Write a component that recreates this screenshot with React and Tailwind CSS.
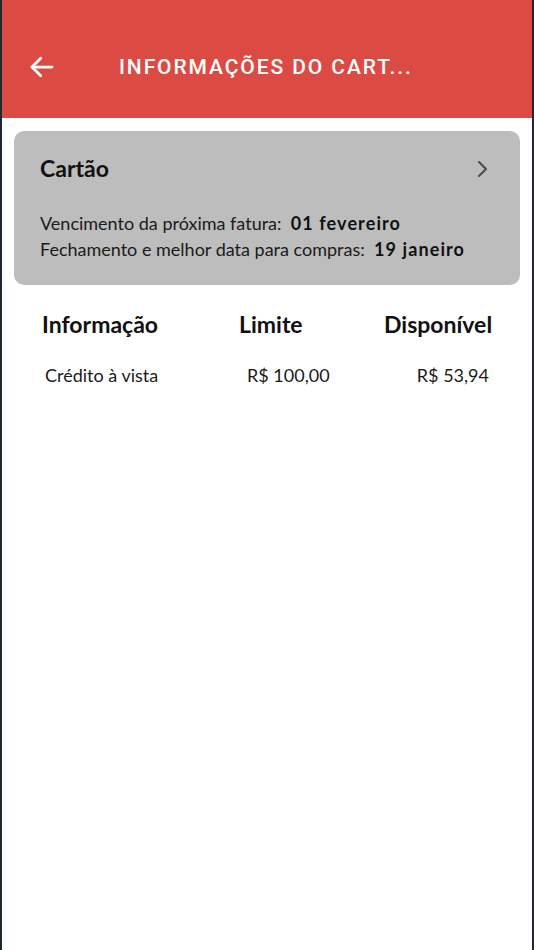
import React from "react";

const ArrowLeft = () => (
  <svg width="30" height="30" viewBox="0 0 24 24" fill="none" stroke="white" strokeWidth="2.2" strokeLinecap="round" strokeLinejoin="round">
    <path d="M20 12H4" />
    <path d="M11 5l-7 7 7 7" />
  </svg>
);

const ChevronRight = () => (
  <svg width="12" height="18" viewBox="0 0 12 18" fill="none" stroke="#4a4a4a" strokeWidth="2" strokeLinecap="round" strokeLinejoin="round">
    <path d="M3 2l7 7-7 7" />
  </svg>
);

const App = () => {
  const rows = [
    { info: "Crédito à vista", limite: "R$ 100,00", disponivel: "R$ 53,94" },
  ];

  return (
    <div className="w-[534px] h-[950px] bg-white border-l-2 border-r-2 border-[#1e2832] font-['Lato','Noto_Sans',sans-serif] text-[#111]">
      {/* header */}
      <div className="h-[118px] bg-[#dc4b43] flex items-center pl-[25px] pt-[16px]">
        <ArrowLeft />
        <h1 className="ml-[62px] text-white text-[21px] font-medium tracking-[1.9px] font-['Roboto',sans-serif] leading-none">
          INFORMAÇÕES DO CART...
        </h1>
      </div>

      {/* card */}
      <div className="mx-[12px] mt-[13px] rounded-[10px] bg-[#bdbdbd] h-[154px] px-[26px] pt-[26px]">
        <div className="flex items-center justify-between pr-[6px]">
          <span className="text-[23px] font-bold leading-none">Cartão</span>
          <ChevronRight />
        </div>
        <div className="mt-[30px] text-[18px] leading-[26px] text-[#1a1a1a]">
          <p>
            Vencimento da próxima fatura:&nbsp; <span className="font-bold tracking-[1.1px] text-[#111]">01 fevereiro</span>
          </p>
          <p>
            Fechamento e melhor data para compras:&nbsp; <span className="font-bold tracking-[1.1px] text-[#111]">19 janeiro</span>
          </p>
        </div>
      </div>

      {/* table */}
      <div className="mt-[28px] pl-[40px] pr-[40px]">
        <div className="grid grid-cols-[197px_145px_1fr] text-[23px] font-bold leading-none">
          <span>Informação</span>
          <span>Limite</span>
          <span className="text-right">Disponível</span>
        </div>
        {rows.map((r) => (
          <div key={r.info} className="grid grid-cols-[197px_145px_1fr] mt-[30px] text-[18px] leading-none text-[#1a1a1a]">
            <span className="pl-[3px]">{r.info}</span>
            <span className="pl-[8px]">{r.limite}</span>
            <span className="text-right pr-[3px]">{r.disponivel}</span>
          </div>
        ))}
      </div>
    </div>
  );
};

export default App;
